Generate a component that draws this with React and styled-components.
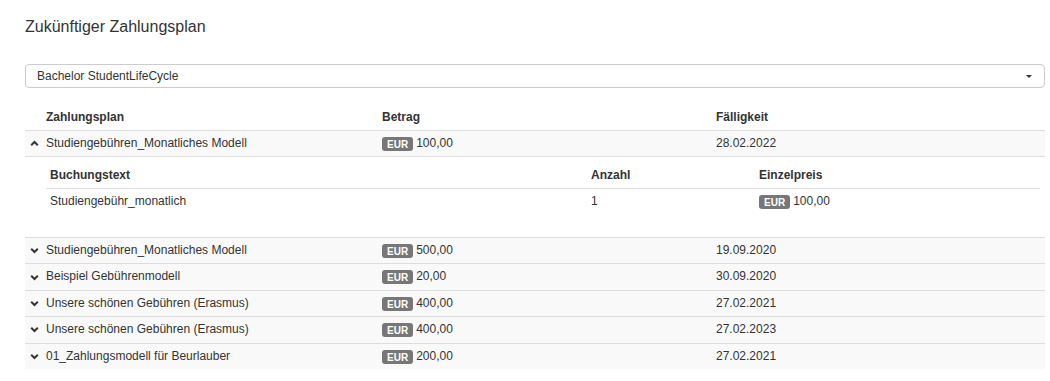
import React from "react";
import styled, { createGlobalStyle } from "styled-components";

const Global = createGlobalStyle`
  html, body { margin: 0; padding: 0; background: #fff; }
  body { font-family: "Liberation Sans", Arial, sans-serif; font-size: 12px; color: #333; }
`;

const Page = styled.div`
  padding: 18px 5px 0 25px;
`;

const Title = styled.h3`
  margin: 0 0 28px;
  font-size: 16px;
  line-height: 18px;
  font-weight: normal;
  color: #333;
`;

const Select = styled.div`
  box-sizing: border-box;
  height: 24px;
  border: 1px solid #ccc;
  border-radius: 4px;
  padding: 0 11px;
  display: flex;
  align-items: center;
  justify-content: space-between;
  line-height: 22px;
  margin-bottom: 17px;
`;

const Caret = styled.span`
  width: 0;
  height: 0;
  border-left: 3px solid transparent;
  border-right: 3px solid transparent;
  border-top: 3px solid #333;
  margin-right: 1px;
`;

const Table = styled.div`
  display: flex;
  flex-direction: column;
`;

const MainGrid = styled.div`
  display: grid;
  grid-template-columns: 16px 336px 334px 1fr;
  align-items: center;
  background: ${(p) => (p.$shaded ? "#f9f9f9" : "#fff")};
  border-top: ${(p) => (p.$noBorder ? "none" : "1px solid #ddd")};
`;

const Cell = styled.div`
  padding: 4px 5px;
  line-height: ${(p) => (p.$bold ? "17px" : "17.4px")};
  white-space: nowrap;
  font-weight: ${(p) => (p.$bold ? "bold" : "normal")};
`;

const IconCell = styled.div`
  display: flex;
  align-items: center;
  justify-content: flex-end;
  padding-right: 2px;
  height: 17px;
`;

const Badge = styled.span`
  display: inline-block;
  background: #777;
  color: #fff;
  font-weight: bold;
  font-size: 10px;
  line-height: 11px;
  padding: 2px 5px 1px;
  border-radius: 3px;
  margin-right: 3px;
  vertical-align: -1px;
`;

const Detail = styled.div`
  border-top: 1px solid #ddd;
  padding: 6px 5px 22.6px 21px;
`;

const SubGrid = styled.div`
  display: grid;
  grid-template-columns: 541px 168px 1fr;
  align-items: center;
  border-top: ${(p) => (p.$border ? "1px solid #ddd" : "none")};
`;

const SubCell = styled.div`
  padding: 4px 4px;
  line-height: 17px;
  white-space: nowrap;
  font-weight: ${(p) => (p.$bold ? "bold" : "normal")};
`;

const Chevron = ({ up }) => (
  <svg width="9" height="7" viewBox="0 0 9 7">
    <polyline
      points={up ? "1.2,5.2 4.5,2 7.8,5.2" : "1.2,1.8 4.5,5 7.8,1.8"}
      fill="none"
      stroke="#333"
      strokeWidth="2"
    />
  </svg>
);

const Amount = ({ value }) => (
  <>
    <Badge>EUR</Badge>
    {value}
  </>
);

const rows = [
  ["Studiengebühren_Monatliches Modell", "500,00", "19.09.2020"],
  ["Beispiel Gebührenmodell", "20,00", "30.09.2020"],
  ["Unsere schönen Gebühren (Erasmus)", "400,00", "27.02.2021"],
  ["Unsere schönen Gebühren (Erasmus)", "400,00", "27.02.2023"],
  ["01_Zahlungsmodell für Beurlauber", "200,00", "27.02.2021"],
];

export default function App() {
  return (
    <>
      <Global />
      <Page>
        <Title>Zukünftiger Zahlungsplan</Title>
        <Select>
          <span>Bachelor StudentLifeCycle</span>
          <Caret />
        </Select>
        <Table>
          <MainGrid $noBorder>
            <span />
            <Cell $bold>Zahlungsplan</Cell>
            <Cell $bold>Betrag</Cell>
            <Cell $bold>Fälligkeit</Cell>
          </MainGrid>
          <MainGrid $shaded>
            <IconCell>
              <Chevron up />
            </IconCell>
            <Cell>Studiengebühren_Monatliches Modell</Cell>
            <Cell>
              <Amount value="100,00" />
            </Cell>
            <Cell>28.02.2022</Cell>
          </MainGrid>
          <Detail>
            <SubGrid>
              <SubCell $bold>Buchungstext</SubCell>
              <SubCell $bold>Anzahl</SubCell>
              <SubCell $bold>Einzelpreis</SubCell>
            </SubGrid>
            <SubGrid $border>
              <SubCell>Studiengebühr_monatlich</SubCell>
              <SubCell>1</SubCell>
              <SubCell>
                <Amount value="100,00" />
              </SubCell>
            </SubGrid>
          </Detail>
          {rows.map(([name, amt, date], i) => (
            <MainGrid $shaded key={i}>
              <IconCell>
                <Chevron />
              </IconCell>
              <Cell>{name}</Cell>
              <Cell>
                <Amount value={amt} />
              </Cell>
              <Cell>{date}</Cell>
            </MainGrid>
          ))}
        </Table>
      </Page>
    </>
  );
}
